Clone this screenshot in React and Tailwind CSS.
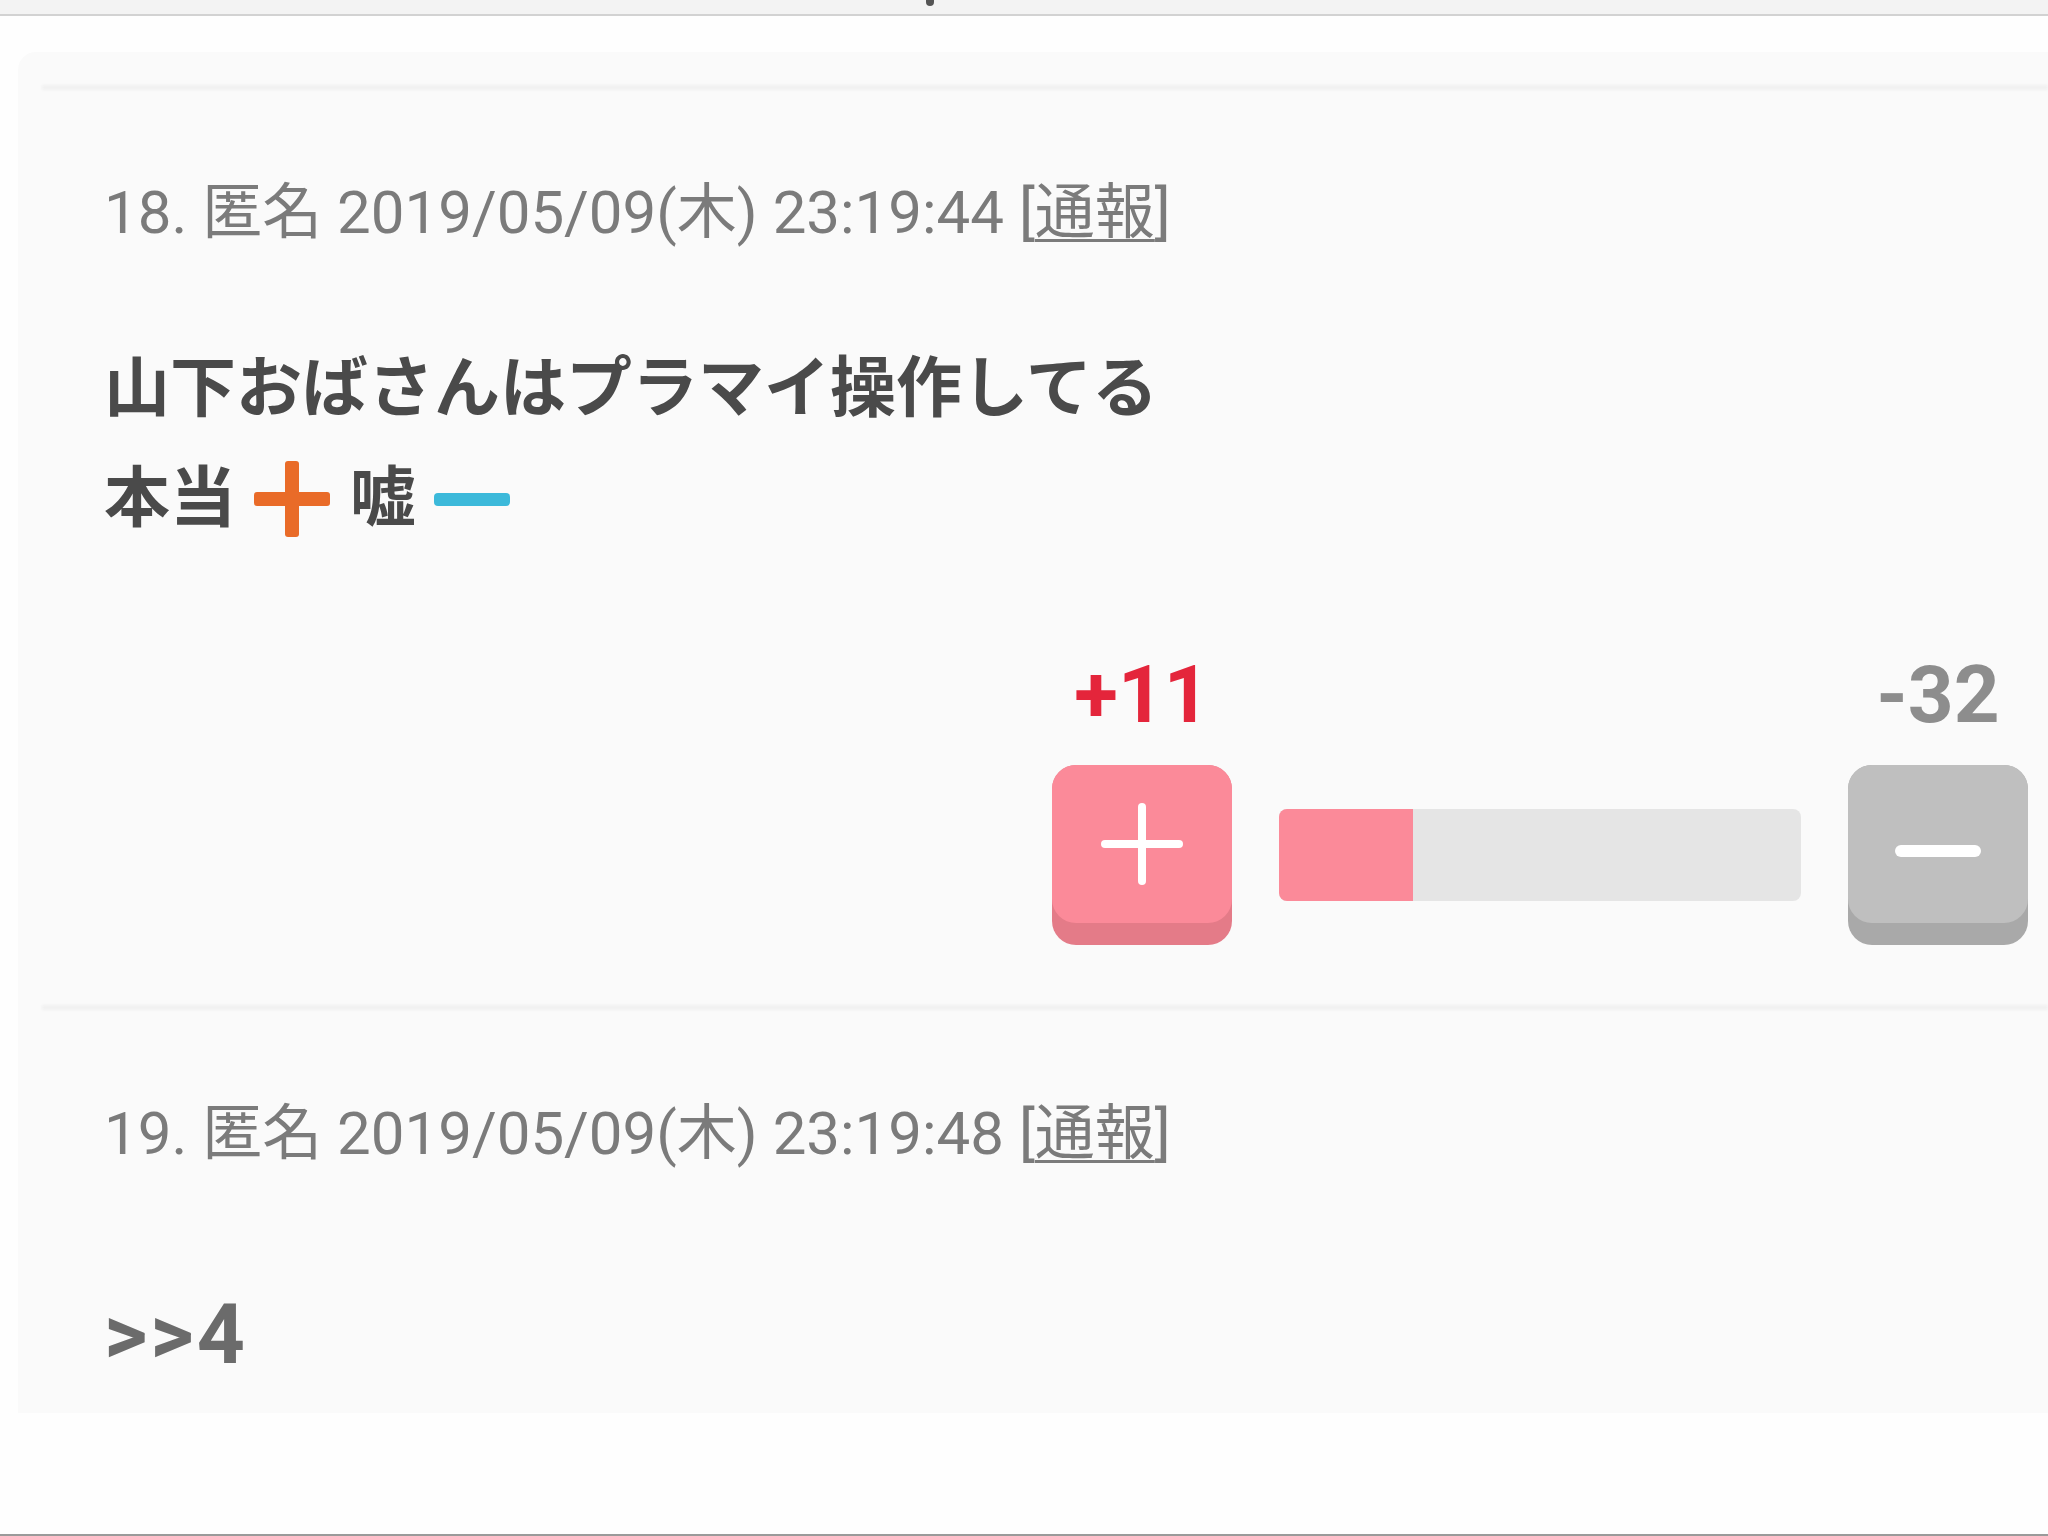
import React from 'react';

const font = { fontFamily: 'Roboto, "Noto Sans CJK JP", sans-serif' };

function Divider() {
  return <div className="ml-[24px] h-[5px] bg-[#f1f1f1] blur-[1px]" />;
}

function Header({ no, time }) {
  return (
    <div className="text-[60px] leading-[72px] text-[#7b7b7b] whitespace-nowrap">
      {no}. 匿名 2019/05/09(木) {time} [<span className="underline underline-offset-[6px] decoration-[3px]">通報</span>]
    </div>
  );
}

function VoteButton({ kind }) {
  const plus = kind === 'plus';
  return (
    <div className={`w-[180px] h-[180px] rounded-[24px] ${plus ? 'bg-[#e47b88]' : 'bg-[#a9a9a9]'}`}>
      <div className={`h-[158px] rounded-[24px] flex items-center justify-center ${plus ? 'bg-[#fb8a99]' : 'bg-[#bfbfbf]'}`}>
        {plus ? (
          <div className="relative w-[82px] h-[82px]">
            <div className="absolute left-0 right-0 top-[37px] h-[8px] rounded-full bg-white" />
            <div className="absolute top-0 bottom-0 left-[37px] w-[8px] rounded-full bg-white" />
          </div>
        ) : (
          <div className="w-[86px] h-[12px] rounded-full bg-white mt-[14px]" />
        )}
      </div>
    </div>
  );
}

export default function App() {
  const plusVotes = 11;
  const minusVotes = 32;
  const ratio = plusVotes / (plusVotes + minusVotes);

  return (
    <div className="w-[2048px] h-[1536px] bg-[#fefefe] flex flex-col overflow-hidden" style={font}>
      {/* browser title bar, title cut off above */}
      <div className="h-[16px] bg-[#f3f3f3] border-b-2 border-[#d2d2d2] pl-[926px]">
        <div className="w-[8px] h-[6px] rounded-b-full bg-[#555]" />
      </div>

      <div className="mt-[36px] ml-[18px] bg-[#fafafa] rounded-tl-[18px] pt-[33px] pb-[28px]">
        <Divider />

        <div className="pl-[86px] pt-[87px]">
          <Header no="18" time="23:19:44" />
          <div className="mt-[85px] text-[66px] leading-[110px] font-bold text-[#4a4a4a] whitespace-nowrap">
            <div>山下おばさんはプラマイ操作してる</div>
            <div className="flex items-center">
              <span>本当</span>
              <span className="relative w-[76px] h-[76px] ml-[18px] mr-[20px]">
                <span className="absolute left-0 right-0 top-[31px] h-[14px] rounded-[3px] bg-[#e96b28]" />
                <span className="absolute top-0 bottom-0 left-[31px] w-[14px] rounded-[3px] bg-[#e96b28]" />
              </span>
              <span>嘘</span>
              <span className="w-[76px] h-[13px] rounded-[4px] bg-[#3cb9da] ml-[18px]" />
            </div>
          </div>
        </div>

        <div className="flex justify-end items-end pr-[20px] mt-[96px]">
          <div className="flex flex-col items-center">
            <div className="text-[80px] leading-[90px] font-bold text-[#e4253b]">+{plusVotes}</div>
            <div className="mt-[25px]">
              <VoteButton kind="plus" />
            </div>
          </div>
          <div className="w-[522px] h-[92px] mx-[47px] mb-[44px] rounded-[8px] bg-[#e5e5e5] overflow-hidden">
            <div className="h-full bg-[#fb8a99]" style={{ width: `${ratio * 100}%` }} />
          </div>
          <div className="flex flex-col items-center">
            <div className="text-[80px] leading-[90px] font-bold text-[#8d8d8d]">-{minusVotes}</div>
            <div className="mt-[25px]">
              <VoteButton kind="minus" />
            </div>
          </div>
        </div>

        <div className="mt-[60px]">
          <Divider />
        </div>

        <div className="pl-[86px] pt-[88px]">
          <Header no="19" time="23:19:48" />
          <div className="mt-[115px] text-[84px] leading-[100px] font-bold tracking-[3px] text-[#6b6b6b]">&gt;&gt;4</div>
        </div>
      </div>

      <div className="flex-1" />
      <div className="h-[2px] bg-[#9a9a9a]" />
    </div>
  );
}
